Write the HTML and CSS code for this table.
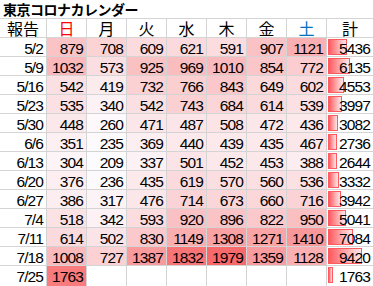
FILE: index.html
```html
<!DOCTYPE html>
<html lang="ja">
<head>
<meta charset="utf-8">
<title>東京コロナカレンダー</title>
<link rel="stylesheet" href="styles.css">
</head>
<body>
<div class="sheet">
  <div class="title">東京コロナカレンダー</div>

  <div class="hd">報告</div><div class="hd sun">日</div><div class="hd">月</div><div class="hd">火</div><div class="hd">水</div><div class="hd">木</div><div class="hd">金</div><div class="hd sat">土</div><div class="hd">計</div>

  <div class="date">5/2</div>
  <div class="num" style="background:rgb(250,196,199)">879</div>
  <div class="num" style="background:rgb(251,211,213)">708</div>
  <div class="num" style="background:rgb(251,219,222)">609</div>
  <div class="num" style="background:rgb(251,218,221)">621</div>
  <div class="num" style="background:rgb(251,220,223)">591</div>
  <div class="num" style="background:rgb(250,194,197)">907</div>
  <div class="num" style="background:rgb(250,176,179)">1121</div>
  <div class="total"><span class="bar" style="width:19px"></span><span class="val">5436</span></div>

  <div class="date">5/9</div>
  <div class="num" style="background:rgb(250,184,186)">1032</div>
  <div class="num" style="background:rgb(251,222,225)">573</div>
  <div class="num" style="background:rgb(250,193,195)">925</div>
  <div class="num" style="background:rgb(250,189,191)">969</div>
  <div class="num" style="background:rgb(250,185,188)">1010</div>
  <div class="num" style="background:rgb(251,198,201)">854</div>
  <div class="num" style="background:rgb(251,205,208)">772</div>
  <div class="total"><span class="bar" style="width:22px"></span><span class="val">6135</span></div>

  <div class="date">5/16</div>
  <div class="num" style="background:rgb(251,224,227)">542</div>
  <div class="num" style="background:rgb(252,235,237)">419</div>
  <div class="num" style="background:rgb(251,209,211)">732</div>
  <div class="num" style="background:rgb(251,206,208)">766</div>
  <div class="num" style="background:rgb(251,199,202)">843</div>
  <div class="num" style="background:rgb(251,216,218)">649</div>
  <div class="num" style="background:rgb(251,219,222)">602</div>
  <div class="total"><span class="bar" style="width:16px"></span><span class="val">4553</span></div>

  <div class="date">5/23</div>
  <div class="num" style="background:rgb(251,225,228)">535</div>
  <div class="num" style="background:rgb(252,241,244)">340</div>
  <div class="num" style="background:rgb(251,224,227)">542</div>
  <div class="num" style="background:rgb(251,208,210)">743</div>
  <div class="num" style="background:rgb(251,213,215)">684</div>
  <div class="num" style="background:rgb(251,218,221)">614</div>
  <div class="num" style="background:rgb(251,225,227)">539</div>
  <div class="total"><span class="bar" style="width:14px"></span><span class="val">3997</span></div>

  <div class="date">5/30</div>
  <div class="num" style="background:rgb(251,232,235)">448</div>
  <div class="num" style="background:rgb(252,248,251)">260</div>
  <div class="num" style="background:rgb(251,230,233)">471</div>
  <div class="num" style="background:rgb(251,229,232)">487</div>
  <div class="num" style="background:rgb(251,227,230)">508</div>
  <div class="num" style="background:rgb(251,230,233)">472</div>
  <div class="num" style="background:rgb(251,233,236)">436</div>
  <div class="total"><span class="bar" style="width:10px"></span><span class="val">3082</span></div>

  <div class="date">6/6</div>
  <div class="num" style="background:rgb(252,240,243)">351</div>
  <div class="num" style="background:rgb(252,250,253)">235</div>
  <div class="num" style="background:rgb(252,239,242)">369</div>
  <div class="num" style="background:rgb(251,233,236)">440</div>
  <div class="num" style="background:rgb(251,233,236)">439</div>
  <div class="num" style="background:rgb(251,233,236)">435</div>
  <div class="num" style="background:rgb(251,231,233)">467</div>
  <div class="total"><span class="bar" style="width:9px"></span><span class="val">2736</span></div>

  <div class="date">6/13</div>
  <div class="num" style="background:rgb(252,244,247)">304</div>
  <div class="num" style="background:rgb(252,252,255)">209</div>
  <div class="num" style="background:rgb(252,241,244)">337</div>
  <div class="num" style="background:rgb(251,228,231)">501</div>
  <div class="num" style="background:rgb(251,232,235)">452</div>
  <div class="num" style="background:rgb(251,232,235)">453</div>
  <div class="num" style="background:rgb(252,237,240)">388</div>
  <div class="total"><span class="bar" style="width:9px"></span><span class="val">2644</span></div>

  <div class="date">6/20</div>
  <div class="num" style="background:rgb(252,238,241)">376</div>
  <div class="num" style="background:rgb(252,250,253)">236</div>
  <div class="num" style="background:rgb(251,233,236)">435</div>
  <div class="num" style="background:rgb(251,218,221)">619</div>
  <div class="num" style="background:rgb(251,222,225)">570</div>
  <div class="num" style="background:rgb(251,223,226)">560</div>
  <div class="num" style="background:rgb(251,225,228)">536</div>
  <div class="total"><span class="bar" style="width:11px"></span><span class="val">3332</span></div>

  <div class="date">6/27</div>
  <div class="num" style="background:rgb(252,237,240)">386</div>
  <div class="num" style="background:rgb(252,243,246)">317</div>
  <div class="num" style="background:rgb(251,230,233)">476</div>
  <div class="num" style="background:rgb(251,210,213)">714</div>
  <div class="num" style="background:rgb(251,214,216)">673</div>
  <div class="num" style="background:rgb(251,215,217)">660</div>
  <div class="num" style="background:rgb(251,210,213)">716</div>
  <div class="total"><span class="bar" style="width:13px"></span><span class="val">3942</span></div>

  <div class="date">7/4</div>
  <div class="num" style="background:rgb(251,226,229)">518</div>
  <div class="num" style="background:rgb(252,241,244)">342</div>
  <div class="num" style="background:rgb(251,220,223)">593</div>
  <div class="num" style="background:rgb(250,193,196)">920</div>
  <div class="num" style="background:rgb(250,195,198)">896</div>
  <div class="num" style="background:rgb(251,201,204)">822</div>
  <div class="num" style="background:rgb(250,191,193)">950</div>
  <div class="total"><span class="bar" style="width:18px"></span><span class="val">5041</span></div>

  <div class="date">7/11</div>
  <div class="num" style="background:rgb(251,218,221)">614</div>
  <div class="num" style="background:rgb(251,228,231)">502</div>
  <div class="num" style="background:rgb(251,200,203)">830</div>
  <div class="num" style="background:rgb(250,174,176)">1149</div>
  <div class="num" style="background:rgb(250,161,163)">1308</div>
  <div class="num" style="background:rgb(250,164,166)">1271</div>
  <div class="num" style="background:rgb(249,152,155)">1410</div>
  <div class="total"><span class="bar" style="width:25px"></span><span class="val">7084</span></div>

  <div class="date">7/18</div>
  <div class="num" style="background:rgb(250,186,188)">1008</div>
  <div class="num" style="background:rgb(251,209,212)">727</div>
  <div class="num" style="background:rgb(249,154,157)">1387</div>
  <div class="num" style="background:rgb(248,117,119)">1832</div>
  <div class="num" style="background:rgb(248,105,107)">1979</div>
  <div class="num" style="background:rgb(249,156,159)">1359</div>
  <div class="num" style="background:rgb(250,176,178)">1128</div>
  <div class="total"><span class="bar" style="width:34px"></span><span class="val">9420</span></div>

  <div class="date">7/25</div>
  <div class="num" style="background:rgb(248,123,125)">1763</div>
  <div class="num"></div>
  <div class="num"></div>
  <div class="num"></div>
  <div class="num"></div>
  <div class="num"></div>
  <div class="num"></div>
  <div class="total"><span class="bar" style="width:5px"></span><span class="val">1763</span></div>
</div>
</body>
</html>
```

FILE: styles.css
```css
html, body {
  margin: 0;
  padding: 0;
  background: #ffffff;
}

.sheet {
  display: grid;
  grid-template-columns: 46px repeat(7, 39px) 46px;
  grid-template-rows: repeat(14, 18px) 20px;
  gap: 1px;
  width: 374px;
  box-sizing: border-box;
  padding-right: 1px;
  background: #d4d4d4;
  color: #000000;
  font-family: "Liberation Sans", Arial, sans-serif;
}

.sheet > div {
  background: #ffffff;
  white-space: nowrap;
}

.title {
  grid-column: 1 / -1;
  padding-left: 3px;
  font-family: "Noto Sans CJK JP", sans-serif;
  font-weight: bold;
  font-size: 14px;
  letter-spacing: -0.5px;
  line-height: 18px;
}

.hd {
  box-sizing: border-box;
  padding-top: 1px;
  text-align: center;
  font-family: "Noto Sans CJK JP", sans-serif;
  font-size: 16px;
  line-height: 17px;
}

.hd.sun {
  color: #ff0000;
}

.hd.sat {
  color: #0070c0;
}

.date,
.num,
.total {
  text-align: right;
  box-sizing: border-box;
  padding: 4px 3px 0 0;
  font-size: 15.5px;
  line-height: 14px;
  letter-spacing: -0.9px;
}

.total {
  position: relative;
}

.bar {
  position: absolute;
  left: 1px;
  top: 1px;
  height: 16px;
  box-sizing: border-box;
  border: 1px solid #ff5a5f;
  background: linear-gradient(90deg, #ff5a5f 0%, #ffb3b5 60%, #ffe6e7 100%);
}

.val {
  position: relative;
}
```
